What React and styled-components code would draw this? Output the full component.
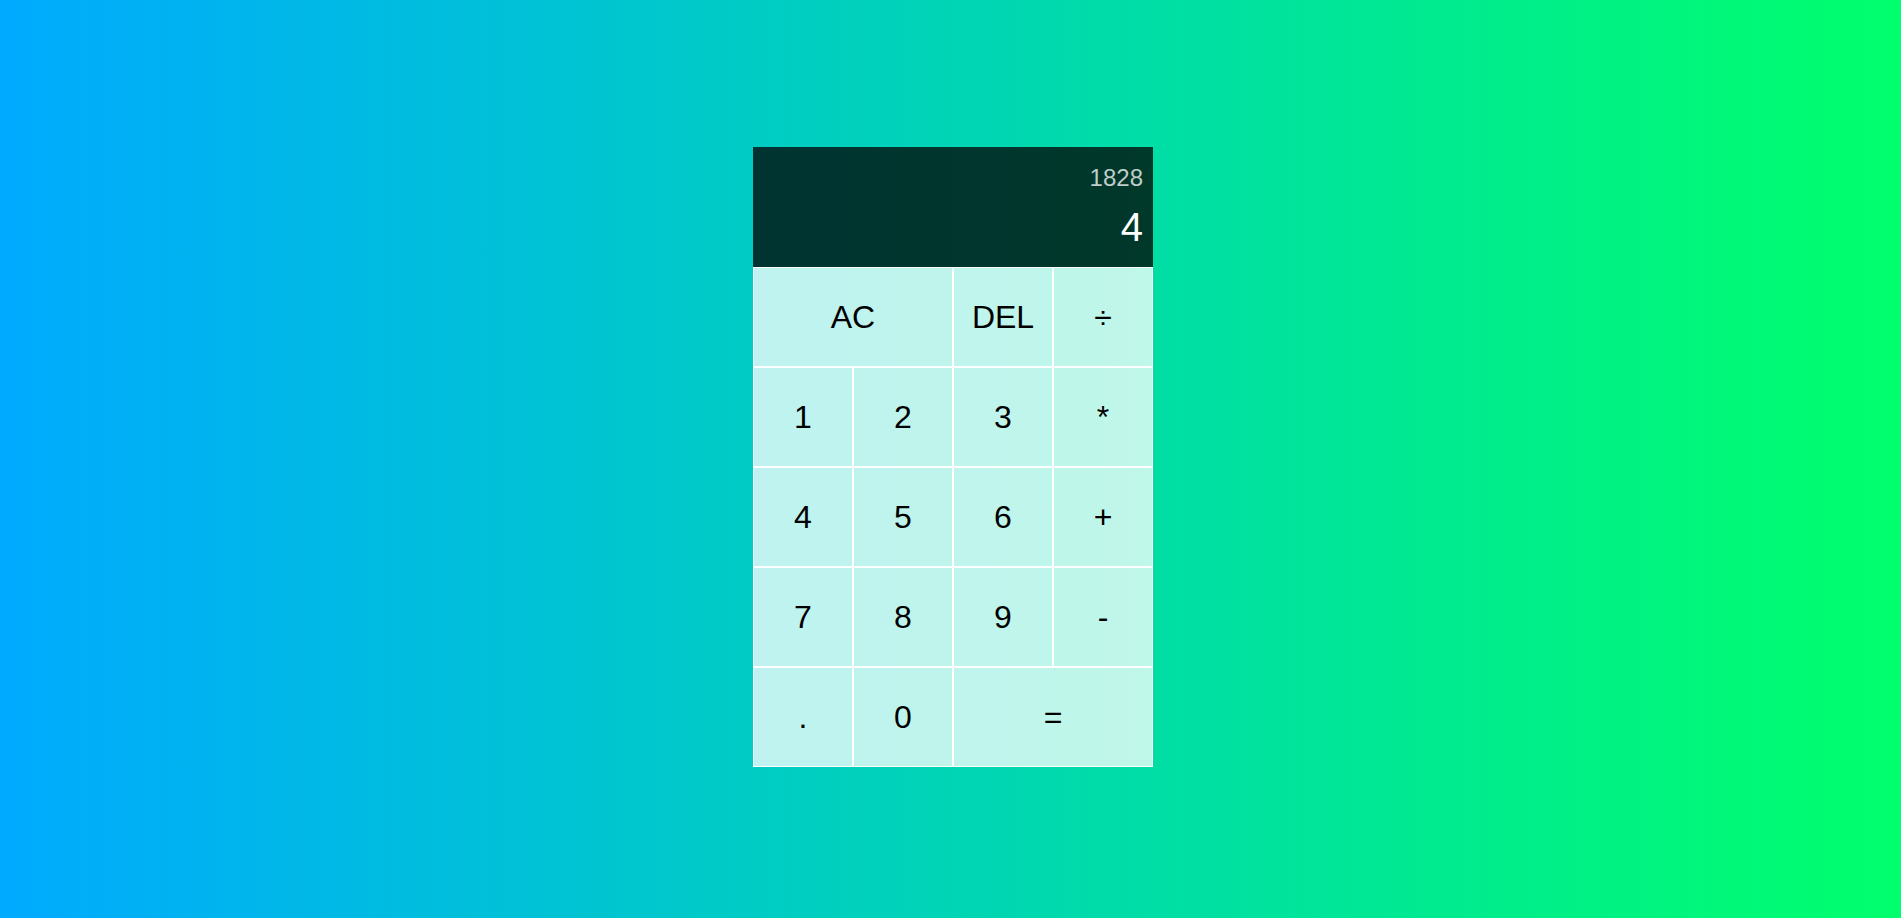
import React from "react";
import styled, { createGlobalStyle } from "styled-components";

const GlobalStyle = createGlobalStyle`
  *, *::before, *::after {
    box-sizing: border-box;
    font-family: "Liberation Sans", Arial, sans-serif;
    font-weight: normal;
  }

  body {
    margin: 0;
    padding: 0;
    background: linear-gradient(to right, #00aaff, #00ff6c);
  }
`;

const CalculatorGrid = styled.div`
  display: grid;
  justify-content: center;
  align-content: center;
  min-height: 100vh;
  padding: 0 0 4px 5px;
  grid-template-columns: repeat(4, 100px);
  grid-template-rows: minmax(120px, auto) repeat(5, 100px);
`;

const Output = styled.div`
  grid-column: 1 / -1;
  background-color: rgba(0, 0, 0, 0.75);
  display: flex;
  align-items: flex-end;
  justify-content: space-around;
  flex-direction: column;
  padding: 10px;
  word-wrap: break-word;
  word-break: break-all;
`;

const PreviousOperand = styled.div`
  color: rgba(255, 255, 255, 0.75);
  font-size: 1.5rem;
`;

const CurrentOperand = styled.div`
  color: white;
  font-size: 2.5rem;
`;

const Key = styled.button`
  cursor: pointer;
  font-size: 2rem;
  color: #000;
  border: 1px solid white;
  outline: none;
  background-color: rgba(255, 255, 255, 0.75);
  grid-column: ${({ $wide }) => ($wide ? "span 2" : "auto")};

  &:hover,
  &:focus {
    background-color: rgba(255, 255, 255, 0.9);
  }
`;

const keys = [
  { label: "AC", wide: true },
  { label: "DEL" },
  { label: "÷" },
  { label: "1" },
  { label: "2" },
  { label: "3" },
  { label: "*" },
  { label: "4" },
  { label: "5" },
  { label: "6" },
  { label: "+" },
  { label: "7" },
  { label: "8" },
  { label: "9" },
  { label: "-" },
  { label: "." },
  { label: "0" },
  { label: "=", wide: true },
];

export default function App() {
  return (
    <>
      <GlobalStyle />
      <CalculatorGrid>
        <Output>
          <PreviousOperand>1828</PreviousOperand>
          <CurrentOperand>4</CurrentOperand>
        </Output>
        {keys.map((k) => (
          <Key key={k.label} $wide={k.wide}>
            {k.label}
          </Key>
        ))}
      </CalculatorGrid>
    </>
  );
}
